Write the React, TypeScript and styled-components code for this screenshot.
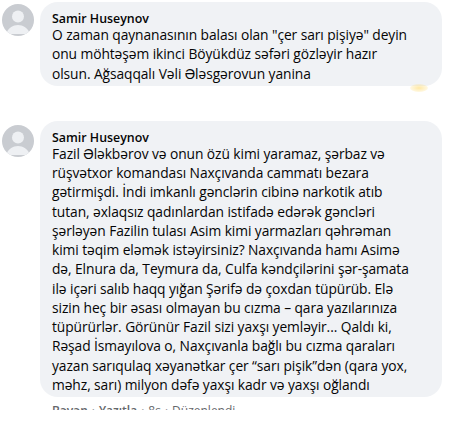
import styled, { createGlobalStyle } from "styled-components";

const Global = createGlobalStyle`
	body {
		margin: 0;
		background: #ffffff;
		font-family: "Open Sans", "Liberation Sans", sans-serif;
		color: #050505;
	}
`;

const Page = styled.div`
	width: 457px;
	height: 423px;
	overflow: hidden;
	padding: 2px 0 0 2px;
	box-sizing: border-box;
	display: flex;
	flex-direction: column;
	gap: 35px;
`;

const Comment = styled.div`
	display: flex;
	align-items: flex-start;
	gap: 6px;
`;

const Avatar = styled.div<{ $top: number }>`
	flex: none;
	width: 32px;
	height: 32px;
	margin-top: ${({ $top }) => $top}px;
	border-radius: 50%;
	overflow: hidden;
	background: #c9ccd1;
`;

const Body = styled.div`
	display: flex;
	flex-direction: column;
`;

const Bubble = styled.div`
	position: relative;
	width: 402px;
	box-sizing: border-box;
	background: #f0f2f5;
	border-radius: 18px;
	padding: 8px 12px 3px;
`;

const Name = styled.div`
	font-size: 12.4px;
	font-weight: 600;
	line-height: 17px;
`;

const Text = styled.div`
	font-size: 13.8px;
	letter-spacing: -0.08px;
	line-height: 19.25px;
	white-space: nowrap;
	color: #050505;
	&:nth-child(2) {
		margin-top: -2px;
	}
`;

const Reaction = styled.div`
	position: absolute;
	right: 14px;
	bottom: -6px;
	width: 18px;
	height: 8px;
	border-radius: 50%;
	background: radial-gradient(ellipse, rgba(255, 214, 90, 0.55), rgba(255, 230, 150, 0));
`;

const Actions = styled.div`
	display: flex;
	gap: 4px;
	padding: 6px 0 0 12px;
	height: 7px;
	overflow: hidden;
	font-size: 12px;
	line-height: 16px;
	color: #65676b;
`;

const Action = styled.span<{ $bold?: boolean }>`
	font-weight: ${({ $bold }) => ($bold ? 600 : 400)};
`;

function AvatarIcon({ top }: { top: number }) {
	return (
		<Avatar $top={top}>
			<svg width="32" height="32" viewBox="0 0 32 32">
				<circle cx="16" cy="12.5" r="6" fill="#eef0f3" />
				<path d="M4 30c2-6 7-9 12-9s10 3 12 9z" fill="#eef0f3" />
			</svg>
		</Avatar>
	);
}

const first = [
	"O zaman qaynanasının balası olan \"çer sarı pişiyə\" deyin",
	"onu möhtəşəm ikinci Böyükdüz səfəri gözləyir hazır",
	"olsun. Ağsaqqalı Vəli Ələsgərovun yanina",
];

const second = [
	"Fazil Ələkbərov və onun özü kimi yaramaz, şərbaz və",
	"rüşvətxor komandası Naxçıvanda cammatı bezara",
	"gətirmişdi. İndi imkanlı gənclərin cibinə narkotik atıb",
	"tutan, əxlaqsız qadınlardan istifadə edərək gəncləri",
	"şərləyən Fazilin tulası Asim kimi yarmazları qəhrəman",
	"kimi təqim eləmək istəyirsiniz? Naxçıvanda hamı Asimə",
	"də, Elnura da, Teymura da, Culfa kəndçilərini şər-şamata",
	"ilə içəri salıb haqq yığan Şərifə də çoxdan tüpürüb. Elə",
	"sizin heç bir əsası olmayan bu cızma – qara yazılarınıza",
	"tüpürürlər. Görünür Fazil sizi yaxşı yemləyir... Qaldı ki,",
	"Rəşad İsmayılova o, Naxçıvanla bağlı bu cızma qaraları",
	"yazan sarıqulaq xəyanətkar çer “sarı pişik”dən (qara yox,",
	"məhz, sarı) milyon dəfə yaxşı kadr və yaxşı oğlandı",
];

export default function App() {
	return (
		<>
			<Global />
			<Page>
				<Comment>
					<AvatarIcon top={2} />
					<Body>
						<Bubble>
							<Name>Samir Huseynov</Name>
							{first.map((l) => (
								<Text key={l}>{l}</Text>
							))}
							<Reaction />
						</Bubble>
					</Body>
				</Comment>
				<Comment>
					<AvatarIcon top={4} />
					<Body>
						<Bubble>
							<Name>Samir Huseynov</Name>
							{second.map((l) => (
								<Text key={l}>{l}</Text>
							))}
						</Bubble>
						<Actions>
							<Action $bold>Bəyən</Action>
							<Action>·</Action>
							<Action $bold>Yazıtla</Action>
							<Action>·</Action>
							<Action>8s</Action>
							<Action>·</Action>
							<Action>Düzenlendi</Action>
						</Actions>
					</Body>
				</Comment>
			</Page>
		</>
	);
}
